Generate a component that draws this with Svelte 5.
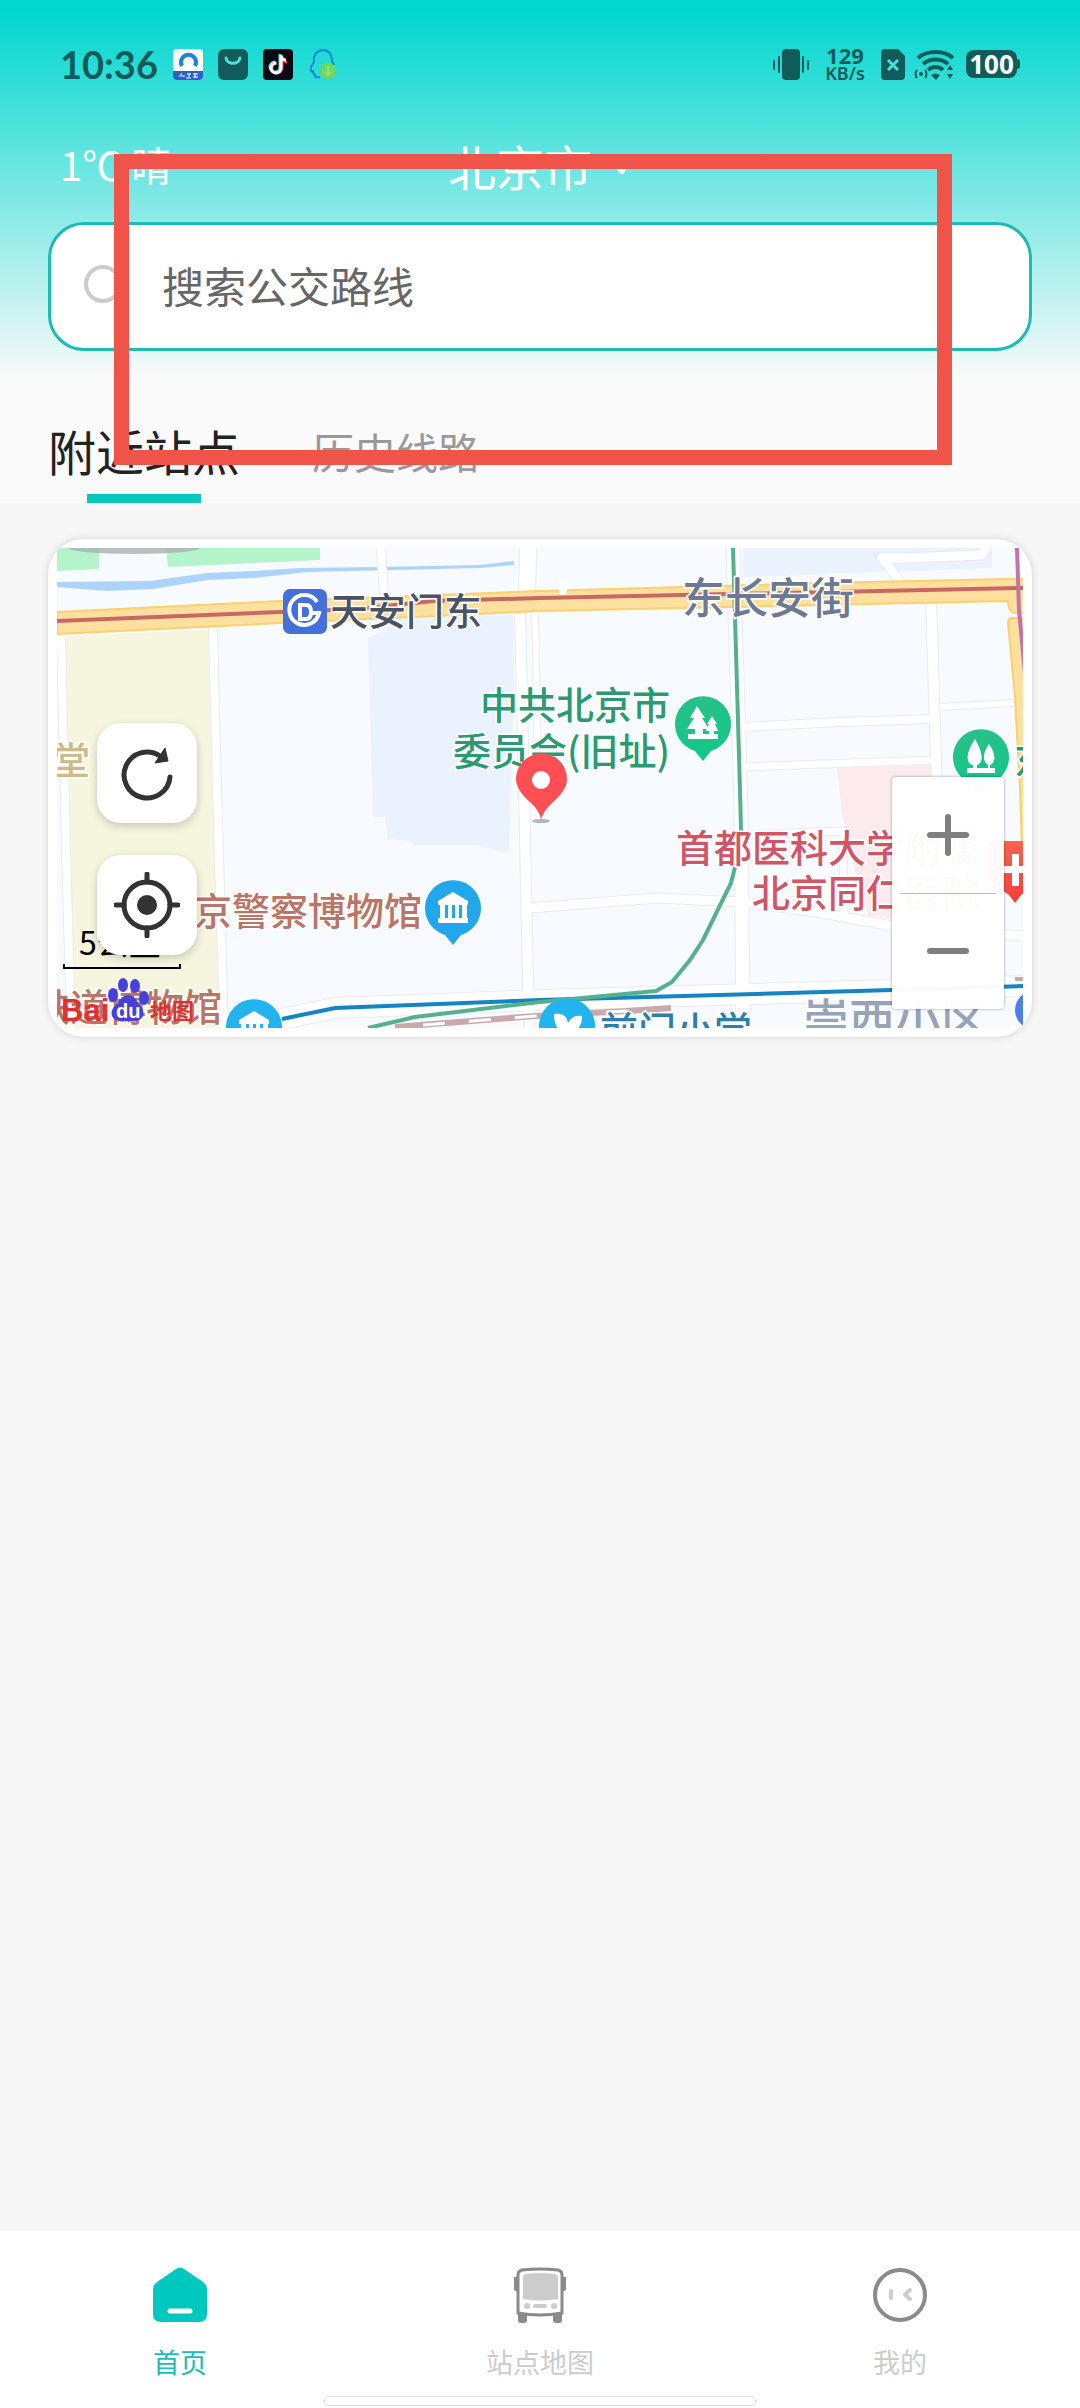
<script>
  const tabs = ["附近站点", "历史线路"];
  let activeTab = $state(0);
  let keyword = $state("");

  const navItems = [
    { id: "home", label: "首页" },
    { id: "bus", label: "站点地图" },
    { id: "me", label: "我的" },
  ];
  let activeNav = $state("home");

  // white streets of the map: path and width
  const streets = [
    { d: "M4 88L9 300L14 480", w: 8 },
    { d: "M156 79L160 242L167 480", w: 8 },
    { d: "M324 0L328 60", w: 8 },
    { d: "M471 0L470 50", w: 16 },
    { d: "M463 60L467 240L472 480", w: 10 },
    { d: "M478 60L482 260", w: 6 },
    { d: "M676 0L684 260L686 480", w: 13 },
    { d: "M874 50L880 242L882 480", w: 10 },
    { d: "M686 179L783 174L875 171", w: 8 },
    { d: "M686 219L876 212", w: 7 },
    { d: "M883 159L958 155", w: 6 },
    { d: "M472 360L600 350L683 354L760 364L835 378L966 388", w: 9 },
    { d: "M690 287L786 283L787 366", w: 7 },
    { d: "M225 471L278 460L483 452L835 442L966 438", w: 20 },
    { d: "M930 0L925 7L850 10L825 10L845 36", w: 9 },
  ];
</script>

<div class="page">
  <header>
    <div class="status">
      <span class="time">10:36</span>
      <svg width="30" height="31" viewBox="0 0 30 31">
        <rect width="30" height="31" rx="4" fill="#fff" />
        <path d="M0 22h30v5a4 4 0 0 1-4 4H4a4 4 0 0 1-4-4z" fill="#2f5fcb" />
        <path d="M9 17a7.500 7.500 0 1 1 13 0" fill="none" stroke="#2181dc" stroke-width="4" />
        <path d="M6 28l3-4M8 27h4M13 29h5M14 25h4M16 24v4M20 25h5M20 28h5M22 24v5" stroke="#fff" stroke-width="1" />
      </svg>
      <svg width="30" height="31" viewBox="0 0 30 31">
        <rect width="30" height="31" rx="6" fill="#115c5b" />
        <path d="M8 9c1 7 13 7 14 0" fill="none" stroke="#4be0d6" stroke-width="3" stroke-linecap="round" />
      </svg>
      <svg width="30" height="31" viewBox="0 0 30 31">
        <rect width="30" height="31" rx="4" fill="#0b0913" />
        <g fill="none" stroke-width="3">
          <path d="M14 14a5 5 0 1 0 5 5V7c0 3 2 6 5 6" stroke="#ff3b5c" />
          <path d="M12 13a5 5 0 1 0 5 5V5" stroke="#3fe8e6" />
          <path d="M13 14a5 5 0 1 0 5 5V6c0 3 2 5 5 5" stroke="#fff" />
        </g>
      </svg>
      <svg width="30" height="31" viewBox="0 0 30 31">
        <path d="M12 28c-3 1-6 0-5-2-2-1-2-3-2-4-2 1-3-1-2-4l3-5C5 5 10 1 15 1s9 4 9 11l2 4" fill="none" stroke="#108ad2" stroke-width="2" />
        <circle cx="20" cy="22" r="7" fill="#5fdc8a" stroke="#7fd24d" stroke-width="2" />
        <path d="M20 17v9m-3-3l3 3 3-3" fill="none" stroke="#a3e24a" stroke-width="2" />
      </svg>

      <div class="status-right">
        <svg width="36" height="31" viewBox="0 0 36 31">
          <rect x="9" width="18" height="31" rx="4" fill="#115c5b" />
          <path d="M1 12v8M6 8v15M30 8v15M35 12v8" stroke="#115c5b" stroke-width="2" stroke-linecap="round" />
        </svg>
        <span class="speed"><b>129</b><span>KB/s</span></span>
        <svg width="24" height="31" viewBox="0 0 24 31">
          <path d="M4 0h13l7 7v20a4 4 0 0 1-4 4H4a4 4 0 0 1-4-4V4a4 4 0 0 1 4-4z" fill="#115c5b" />
          <path d="M7 11l10 10M17 11L7 21" stroke="#4be0d6" stroke-width="3" />
        </svg>
        <svg class="wifi" width="40" height="31" viewBox="0 0 40 31">
          <g fill="none" stroke="#115c5b" stroke-width="4">
            <path d="M4 9c9-8 26-8 35 0" />
            <path d="M9 15c7-6 18-6 25 0" />
            <path d="M14 21c4-4 11-4 15 0" />
          </g>
          <path d="M17 26c3-2 6-2 9 0l-4 5z" fill="#115c5b" />
          <circle cx="7" cy="25" r="2" fill="#115c5b" />
          <path d="M3 21c-2 2-2 6 0 8M11 21c2 2 2 6 0 8" fill="none" stroke="#115c5b" stroke-width="2" />
          <path d="M36 16l3 5h-6zM36 30l3-5h-6z" fill="#115c5b" />
        </svg>
        <span class="battery">100</span>
      </div>
    </div>

    <div class="place">
      <span class="weather">1℃ 晴</span>
      <button class="city">
        北京市
        <svg width="20" height="14" viewBox="0 0 20 14">
          <path d="M3 2h14l-7 9z" fill="#fff" stroke="#fff" stroke-width="4" stroke-linejoin="round" />
        </svg>
      </button>
    </div>

    <label class="search">
      <svg width="44" height="44" viewBox="0 0 44 44" fill="none" stroke="#ccc" stroke-width="4">
        <circle cx="20" cy="19" r="17" />
        <path d="M33 32l5 5" stroke-linecap="round" />
      </svg>
      <input type="text" aria-label="搜索公交路线" placeholder="搜索公交路线" bind:value={keyword} />
    </label>
    <div class="frame"></div>
  </header>

  <div class="tabs">
    {#each tabs as tab, i}
      <button class="tab" class:active={activeTab === i} onclick={() => (activeTab = i)}>{tab}</button>
    {/each}
  </div>

  <main>
    <section class="card">
      <div class="map">
        <svg class="tiles" viewBox="0 0 966 480" preserveAspectRatio="xMidYMid slice">
          <defs>
            <linearGradient id="green" x2="0" y2="1">
              <stop offset="0" stop-color="#28c08a" />
              <stop offset="1" stop-color="#10c985" />
            </linearGradient>
            <linearGradient id="red" x2="0" y2="1">
              <stop offset="0" stop-color="#f9634f" />
              <stop offset="1" stop-color="#f2403c" />
            </linearGradient>
            <path id="pin" d="M0 37L-8 27A28 28 0 1 1 8 27Z" />
            <g id="museum" fill="#fff">
              <path d="M0-16l15 9v4h-30v-4zM-15 10h30v5h-30z" />
              <path d="M-13-4h5v14h-5zM-5-4h4v14h-4zM2-4h4v14H2zM9-4h5v14H9z" />
            </g>
          </defs>

          <rect width="966" height="480" fill="#f7faff" />
          <path d="M6 88L151 82L155 232L163 480H19L12 260Z" fill="#f6f6df" />
          <path d="M0 0H42V21L0 23ZM109 0H263V12L111 19Z" fill="#b5f3ca" />
          <ellipse cx="77" cy="0" rx="66" ry="6" fill="#a9b1b1" opacity=".8" />
          <path d="M311 90L330 82L336 70L456 67L457 140L452 304L440 303L420 297H356L355 293L331 291L328 269H316Z" fill="#eaf2ff" />
          <path d="M686 0H935V20L686 29Z" fill="#eaf2fd" />
          <path d="M780 220L876 217L880 374L811 368L795 312L785 265Z" fill="#fdeaec" />
          <path d="M0 34L93 33L150 25L196 23L243 20L320 19L423 17L457 13V17L423 20L250 24L196 30L150 32L96 41L50 43L0 39Z" fill="#acd3fb" />

          <g fill="none" stroke="#e8ebf1">
            {#each streets as street}
              <path d={street.d} stroke-width={street.w + 2} />
            {/each}
          </g>
          <g fill="none" stroke="#fff" stroke-linejoin="round">
            {#each streets as street}
              <path d={street.d} stroke-width={street.w} />
            {/each}
          </g>

          <path d="M0 64L223 53L483 43L766 35L951 31H970V65H958Q951 64 951 53L483 63L223 75L0 86Z" fill="#fddf9f" stroke="#fbd16c" stroke-width="2" />
          <path d="M970 70H955Q951 70 951 75L958 149L963 242L965 300H970Z" fill="#fddf9f" stroke="#fbd16c" stroke-width="2" />
          <path d="M506 36V43" stroke="#fff" stroke-width="8" stroke-linecap="round" />

          <g fill="none" stroke-width="4">
            <path d="M338 479L478 468L570 463L614 460" stroke="#c9a9a9" stroke-width="6" />
            <path d="M366 477L478 468L570 463" stroke="#fff" stroke-width="3" stroke-dasharray="22 24" />
            <path d="M0 73L223 64L300 61L376 53L483 50L966 40" stroke="#c96762" />
            <path d="M960 0L962 62L968 126" stroke="#c073ad" />
            <path d="M225 471L278 460L483 452L835 442L966 438" stroke="#1484c4" />
            <path d="M676 0L683 242L684 282L679 315L674 335L646 392L633 412L615 434L599 443L483 454L358 469L311 480" stroke="#55b08c" />
          </g>
          <path d="M958 431H966" stroke="#c9a9a9" stroke-width="4" />

          <g class="label">
            <text x="273" y="77" fill="#4a5263">天安门东</text>
            <text class="street" x="711" y="66" text-anchor="middle" fill="#6d7893">东长安街</text>
            <g fill="#2a9a72">
              <text x="613" y="171" text-anchor="end">中共北京市</text>
              <text x="613" y="217" text-anchor="end">委员会(旧址)</text>
              <text x="957" y="226">东</text>
            </g>
            <text x="-5" y="226" fill="#cfb988">堂</text>
            <g fill="#b97566">
              <text x="365" y="377" text-anchor="end">京警察博物馆</text>
              <text x="165" y="473" text-anchor="end">铁道博物馆</text>
            </g>
            <g fill="#d05666">
              <text x="619" y="314">首都医科大学附属</text>
              <text x="923" y="359" text-anchor="end">北京同仁医院</text>
            </g>
            <text class="area" x="746" y="489" fill="#97a3b8">崇西小区</text>
            <text x="543" y="496" fill="#2d7fa8">前门小学</text>
          </g>

          <rect x="226" y="41" width="44" height="45" rx="7" fill="#4470db" />
          <g fill="none" stroke="#fff" stroke-width="4">
            <path d="M260 54A15 15 0 1 0 262 65H254" />
            <path d="M243 57H249Q254 57 254 64Q254 71 249 71H243Z" />
          </g>

          <g transform="translate(646 176)">
            <use href="#pin" fill="url(#green)" />
            <path d="M-6-18L2-6H-1L6 5H0V10H6V7H3L6 0H4L9-8L14 0H12L15 7H11V10H15V15H-15V10H-8V5H-16L-9-6H-13Z" fill="#fff" />
          </g>
          <g transform="translate(924 209)">
            <use href="#pin" fill="url(#green)" />
            <path d="M-6-18C-16-3-15 7-8 8V11H-14V16H14V11H9V8C16 5 14-5 8-13C3-6 0 3 7 8V11H-4V8C3 6 2-4-6-18Z" fill="#fff" />
          </g>
          <g transform="translate(396 360)">
            <use href="#pin" fill="#22a8ea" />
            <use href="#museum" />
          </g>
          <g transform="translate(197 479)">
            <use href="#pin" fill="#22b4ee" />
            <use href="#museum" />
          </g>
          <g transform="translate(510 478)">
            <use href="#pin" fill="#22b4ee" />
            <path d="M-13-12C-3-13 0-9 1-3C4-9 9-11 15-10C15 1 10 6 1 9C-9 6-13-1-13-12Z" fill="#fff" />
          </g>
          <g transform="translate(958 321)">
            <path d="M-22-28H22Q28-28 28-22V10L6 26L0 34L-6 26L-28 10V-22Q-28-28-22-28Z" fill="url(#red)" />
            <path d="M-3-15H4V-3H14V4H4V17H-3V4H-13V-3H-3Z" fill="#fff" />
          </g>
          <circle cx="977" cy="462" r="19" fill="#4f7fe2" />

          <ellipse cx="484" cy="273" rx="9" ry="2" fill="#b3b6b8" />
          <path d="M484 272Q483 263 474 255Q459 242 459 231A25 25 0 0 1 510 231Q510 242 495 255Q486 263 484 272Z" fill="#ff4f55" />
          <circle cx="484" cy="232" r="9" fill="#fff" />

          <text class="distance" x="22" y="407">5公里</text>
          <path d="M7 416V420H123V416" fill="none" stroke="#000" stroke-width="2" />

          <g class="brand">
            <text x="4" y="473" font-size="31" fill="#e0302f">Bai</text>
            <g fill="#4640df">
              <ellipse cx="66" cy="437" rx="5" ry="7" />
              <ellipse cx="78" cy="438" rx="5" ry="7" />
              <ellipse cx="56" cy="447" rx="5" ry="7" />
              <ellipse cx="87" cy="450" rx="5" ry="7" />
              <path d="M71 447Q77 447 81 455Q88 461 86 468Q83 475 71 473Q58 475 55 468Q53 461 61 455Q65 447 71 447Z" />
            </g>
            <text x="59" y="470" font-size="20" fill="#fff">du</text>
            <text x="93" y="471" font-size="22" fill="#e0302f">地图</text>
          </g>
        </svg>

        <div class="tools">
          <button aria-label="刷新">
            <svg width="66" height="66" viewBox="0 0 66 66">
              <path d="M56 37A23 23 0 1 1 46 16" fill="none" stroke="#333" stroke-width="5" stroke-linecap="round" />
              <path d="M51 8L54 21L41 23Z" fill="#333" stroke="#333" stroke-width="1" stroke-linejoin="round" />
            </svg>
          </button>
          <button aria-label="定位">
            <svg width="66" height="66" viewBox="0 0 66 66">
              <circle cx="33" cy="33" r="23" fill="none" stroke="#333" stroke-width="5" />
              <circle cx="33" cy="33" r="10" fill="#333" />
              <path d="M33 2V10M33 56V64M2 33H10M56 33H64" stroke="#333" stroke-width="5" stroke-linecap="round" />
            </svg>
          </button>
        </div>

        <div class="zoom">
          <button aria-label="放大">
            <svg width="42" height="42" viewBox="0 0 42 42">
              <path d="M21 3V39M3 21H39" stroke="#7f7f7f" stroke-width="6" stroke-linecap="round" />
            </svg>
          </button>
          <hr />
          <button aria-label="缩小">
            <svg width="42" height="42" viewBox="0 0 42 42">
              <path d="M3 21H39" stroke="#7f7f7f" stroke-width="6" stroke-linecap="round" />
            </svg>
          </button>
        </div>
      </div>
    </section>
  </main>

  <nav>
    {#each navItems as item}
      <a href="#{item.id}" class:active={activeNav === item.id} onclick={() => (activeNav = item.id)}>
        <svg width="56" height="56" viewBox="0 0 56 56">
          {#if item.id === "home"}
            <path d="M24 2Q28-1 32 2L51 15Q55 18 55 23V47Q55 55 47 55H9Q1 55 1 47V23Q1 18 5 15Z" fill="#00c8be" />
            <path d="M18 44H38" stroke="#fff" stroke-width="5" stroke-linecap="round" />
          {:else if item.id === "bus"}
            <path d="M6 46h9v7q0 3-3 3H9q-3 0-3-3zM41 46h9v7q0 3-3 3h-3q-3 0-3-3zM2 10h4v14H4q-2 0-2-2zM50 10h4v12q0 2-2 2h-2z" fill="#8a8a8a" />
            <path d="M10 3Q28 1 46 3Q50 4 50 8V46Q28 50 6 46V8Q6 4 10 3Z" fill="#fff" stroke="#8a8a8a" stroke-width="3" />
            <path d="M13 7Q28 5 43 7Q46 8 46 10V32Q28 35 11 32V10Q11 8 13 7Z" fill="#ccc" />
            <path d="M23 39H33" stroke="#ccc" stroke-width="4" stroke-linecap="round" />
            <circle cx="15" cy="39" r="3" fill="#ccc" />
            <circle cx="42" cy="39" r="3" fill="#ccc" />
          {:else}
            <circle cx="28" cy="28" r="25" fill="none" stroke="#8a8a8a" stroke-width="4" />
            <path d="M19 24V31M38 23L33 27.500L38 32" fill="none" stroke="#ccc" stroke-width="4" stroke-linecap="round" stroke-linejoin="round" />
          {/if}
        </svg>
        {item.label}
      </a>
    {/each}
    <div class="home-bar"></div>
  </nav>
</div>

<style>
  :global(body) {
    margin: 0;
    background: #f7f7f7;
  }
  .page {
    min-height: 100vh;
    display: flex;
    flex-direction: column;
    font-family: "Noto Sans", "Noto Sans CJK SC", sans-serif;
  }
  button {
    border: none;
    padding: 0;
    background: none;
    font: inherit;
    cursor: pointer;
  }
  svg {
    display: block;
    flex-shrink: 0;
  }

  header {
    position: relative;
    padding: 0 48px 30px;
    background: linear-gradient(180deg, #00d7cf 10px, #fafafa 100%);
  }
  .status {
    height: 128px;
    padding: 0 12px;
    display: flex;
    align-items: center;
    gap: 15px;
    color: #115c5b;
  }
  .time {
    font-family: Lato, sans-serif;
    font-size: 38px;
    line-height: 48px;
    font-weight: 700;
  }
  .status-right {
    margin-left: auto;
    margin-right: 3px;
    display: flex;
    align-items: center;
    gap: 12px;
  }
  .speed {
    display: flex;
    flex-direction: column;
    align-items: center;
    width: 48px;
    font-size: 18px;
    line-height: 18px;
    font-weight: 600;
  }
  .speed b {
    font-size: 22px;
    font-weight: 700;
  }
  .wifi {
    margin-left: -3px;
  }
  .battery {
    position: relative;
    width: 51px;
    height: 28px;
    border-radius: 8px;
    background: #115c5b;
    color: #fff;
    font-size: 26px;
    line-height: 28px;
    font-weight: 700;
    text-align: center;
  }
  .battery::after {
    content: "";
    position: absolute;
    right: -3px;
    top: 9px;
    width: 3px;
    height: 10px;
    border-radius: 0 3px 3px 0;
    background: #115c5b;
  }
  .place {
    height: 80px;
    padding: 0 12px 14px;
    display: grid;
    grid-template-columns: 1fr auto 1fr;
    align-items: start;
    color: #fff;
  }
  .weather {
    font-family: "Noto Sans CJK SC", sans-serif;
    font-size: 40px;
    line-height: 72px;
  }
  .city {
    display: flex;
    align-items: center;
    gap: 20px;
    color: #fff;
    font-size: 48px;
    line-height: 80px;
  }
  .search {
    display: flex;
    align-items: center;
    gap: 35px;
    height: 123px;
    padding: 0 32px;
    border: 3px solid #1cbcb4;
    border-radius: 36px;
    background: #fff;
  }
  .search input {
    flex: 1;
    min-width: 0;
    border: none;
    outline: none;
    padding: 0;
    background: none;
    font: inherit;
    font-size: 42px;
    color: #333;
  }
  .search input::placeholder {
    color: #666;
    opacity: 1;
  }
  .frame {
    position: absolute;
    z-index: 2;
    top: 154px;
    left: 114px;
    right: 128px;
    height: 281px;
    border: 15px solid #ef534a;
    pointer-events: none;
  }

  .tabs {
    display: flex;
    gap: 72px;
    padding: 30px 48px 0;
    background: #fafafa;
  }
  .tab {
    display: flex;
    flex-direction: column;
    align-items: center;
    height: 92px;
    font-size: 42px;
    line-height: 83px;
    color: #999;
  }
  .tab.active {
    font-size: 48px;
    color: #222;
  }
  .tab.active::after {
    content: "";
    width: 114px;
    height: 9px;
    flex-shrink: 0;
    background: #05c7bd;
  }

  main {
    padding: 36px 48px 48px;
  }
  .card {
    padding: 9px;
    border-radius: 36px;
    background: #fff;
    overflow: hidden;
    box-shadow: 0 0 9px #00000026;
  }
  .map {
    position: relative;
    height: 480px;
    overflow: hidden;
  }
  .tiles {
    width: 100%;
    height: 100%;
  }
  .label {
    font-family: "Noto Sans CJK SC", sans-serif;
    font-size: 38px;
    font-weight: 500;
    paint-order: stroke;
    stroke: #fff;
    stroke-width: 3px;
  }
  .street {
    font-size: 43px;
  }
  .area {
    font-size: 46px;
  }
  .distance {
    font-family: "Noto Sans CJK SC", sans-serif;
    font-size: 32px;
  }
  .brand {
    font-family: "Liberation Sans", "Noto Sans CJK SC", sans-serif;
    font-weight: 700;
  }
  .tools {
    position: absolute;
    left: 40px;
    top: 175px;
    display: flex;
    flex-direction: column;
    gap: 32px;
  }
  .tools button {
    display: grid;
    place-items: center;
    width: 100px;
    height: 100px;
    border-radius: 24px;
    background: #fff;
    box-shadow: 0 3px 9px #00000033;
  }
  .zoom {
    position: absolute;
    right: 19px;
    bottom: 19px;
    width: 112px;
    border-radius: 4px;
    background: #fffffff7;
    box-shadow: 0 0 3px #00000066;
  }
  .zoom button {
    display: grid;
    place-items: center;
    width: 100%;
    height: 116px;
  }
  .zoom hr {
    margin: 0 8px -1px;
    border: none;
    border-top: 1px solid #bbb;
  }

  nav {
    position: relative;
    margin-top: auto;
    height: 177px;
    display: grid;
    grid-template-columns: repeat(3, 1fr);
    background: #fff;
  }
  nav a {
    display: flex;
    flex-direction: column;
    align-items: center;
    gap: 20px;
    padding-top: 36px;
    font-size: 27px;
    line-height: 40px;
    color: #ccc;
    text-decoration: none;
  }
  nav a.active {
    color: #1cbcb4;
  }
  .home-bar {
    position: absolute;
    left: 30%;
    right: 30%;
    bottom: 2px;
    height: 8px;
    border: 1px solid #ddd;
    border-radius: 6px;
    background: #fff;
  }
</style>
